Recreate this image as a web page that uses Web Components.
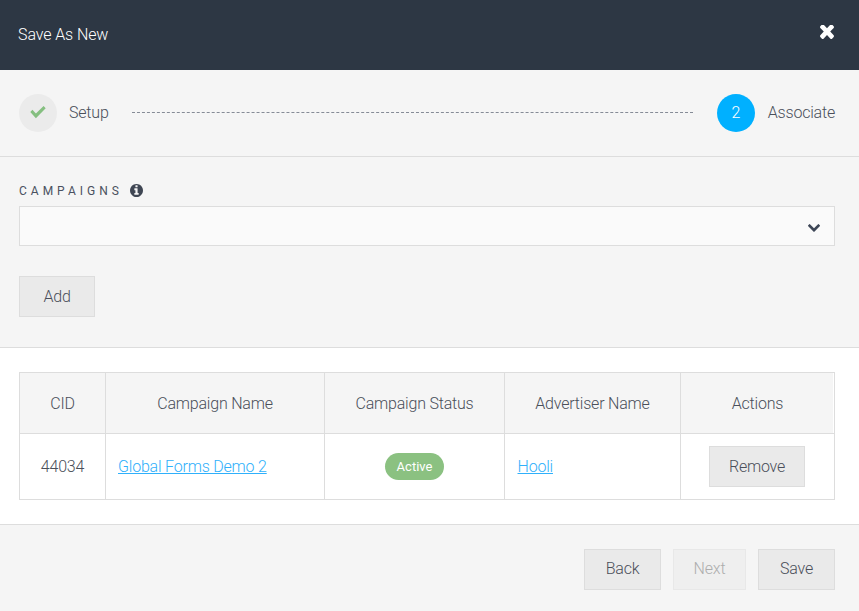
<!DOCTYPE html>
<html lang="en">
<head>
<meta charset="utf-8">
<title>Save As New</title>
<style>
  html, body { margin: 0; padding: 0; background: #f5f5f5; }
  body { font-family: Roboto, "Liberation Sans", sans-serif; font-weight: 300; font-size: 16px; letter-spacing: -0.2px; color: #4a4f5a; }
</style>
</head>
<body>
<save-modal></save-modal>

<script>
const ICONS = {
  check: ["0 0 16 12", "M0.3 5.6 L2.4 3.5 L5.9 7 L13.6 0 L15.7 2.1 L5.9 11.4 Z"],
  times: ["110 310 1188 1124", "M1298 1202q0 40-28 68l-136 136q-28 28-68 28t-68-28l-294-294-294 294q-28 28-68 28t-68-28l-136-136q-28-28-28-68t28-68l294-294-294-294q-28-28-28-68t28-68l136-136q28-28 68-28t68 28l294 294 294-294q28-28 68-28t68 28l136 136q28 28 28 68t-28 68l-294 294 294 294q28 28 28 68z"],
  chevron: ["109 535 1574 1033", "M1683 808l-742 741q-19 19-45 19t-45-19l-742-741q-19-19-19-45.500t19-45.500l166-165q19-19 45-19t45 19l531 531 531-531q19-19 45-19t45 19l166 165q19 19 19 45.500t-19 45.500z"],
  info: ["128 128 1536 1536", "M1152 1376v-160q0-14-9-23t-23-9h-96v-512q0-14-9-23t-23-9h-320q-14 0-23 9t-9 23v160q0 14 9 23t23 9h96v320h-96q-14 0-23 9t-9 23v160q0 14 9 23t23 9h448q14 0 23-9t9-23zm-128-896v-160q0-14-9-23t-23-9h-192q-14 0-23 9t-9 23v160q0 14 9 23t23 9h192q14 0 23-9t9-23zm640 416q0 209-103 385.500t-279.500 279.500-385.500 103-385.500-103-279.500-279.500-103-385.500 103-385.500 279.500-279.500 385.500-103 385.500 103 279.500 279.500 103 385.500z"]
};

class FaIcon extends HTMLElement {
  connectedCallback() {
    const [box, d] = ICONS[this.getAttribute("name")];
    const w = this.getAttribute("w");
    const h = this.getAttribute("h");
    const shadow = this.attachShadow({ mode: "open" });
    shadow.innerHTML = `
      <style>
        :host { display: block; width: ${w}px; height: ${h}px; line-height: 0; }
        svg { display: block; width: 100%; height: 100%; fill: currentColor; }
      </style>
      <svg viewBox="${box}" preserveAspectRatio="none"><path d="${d}"></path></svg>`;
  }
}

class UiButton extends HTMLElement {
  constructor() {
    super();
    const shadow = this.attachShadow({ mode: "open" });
    shadow.innerHTML = `
      <style>
        :host {
          display: inline-flex;
          align-items: center;
          justify-content: center;
          box-sizing: border-box;
          height: 41px;
          background: #eaeaea;
          border: 1px solid #dddddd;
          color: #4a4f5a;
          font-size: 16px;
          cursor: pointer;
        }
        :host([disabled]) {
          background: #efefef;
          border-color: #e8e8e8;
          color: #adadad;
          cursor: default;
        }
      </style>
      <slot></slot>`;
  }
}

class StatusBadge extends HTMLElement {
  constructor() {
    super();
    const shadow = this.attachShadow({ mode: "open" });
    shadow.innerHTML = `
      <style>
        :host {
          display: inline-flex;
          align-items: center;
          justify-content: center;
          width: 59px;
          height: 27px;
          border-radius: 14px;
          background: #8bc181;
          color: #ffffff;
          font-size: 13px;
          font-weight: 400;
          letter-spacing: 0;
        }
      </style>
      <slot></slot>`;
  }
}

class StepItem extends HTMLElement {
  constructor() {
    super();
    const shadow = this.attachShadow({ mode: "open" });
    shadow.innerHTML = `
      <style>
        :host { display: flex; align-items: center; gap: 12px; }
        :host([active]) { gap: 13px; }
        .dot {
          width: 38px;
          height: 38px;
          border-radius: 50%;
          display: flex;
          align-items: center;
          justify-content: center;
          background: #ebebeb;
          color: #85bf80;
        }
        :host([active]) .dot { background: #00b0ff; color: #ffffff; }
      </style>
      <div class="dot"><slot name="mark"></slot></div>
      <span><slot></slot></span>`;
  }
}

class StepBar extends HTMLElement {
  constructor() {
    super();
    const shadow = this.attachShadow({ mode: "open" });
    shadow.innerHTML = `
      <style>
        :host {
          display: flex;
          align-items: center;
          box-sizing: border-box;
          height: 87px;
          padding: 0 24px 1px 19px;
          border-bottom: 1px solid #dddddd;
        }
        .line { flex: 1; border-top: 1px dashed #858b96; margin: 0 24px 0 23px; }
        .tick { margin-top: -1px; }
      </style>
      <step-item>
        <fa-icon class="tick" slot="mark" name="check" w="16" h="13"></fa-icon>
        Setup
      </step-item>
      <div class="line"></div>
      <step-item active>
        <span slot="mark">2</span>
        Associate
      </step-item>`;
  }
}

class ModalHeader extends HTMLElement {
  constructor() {
    super();
    const shadow = this.attachShadow({ mode: "open" });
    shadow.innerHTML = `
      <style>
        :host {
          display: flex;
          align-items: center;
          justify-content: space-between;
          height: 70px;
          box-sizing: border-box;
          padding: 0 25px 6px 18px;
          background: #2d3744;
          color: #ffffff;
          font-size: 16px;
          font-weight: 300;
        }
        .title { margin-top: 4px; letter-spacing: -0.1px; }
      </style>
      <span class="title"><slot></slot></span>
      <fa-icon name="times" w="14" h="14"></fa-icon>`;
  }
}

class CampaignSelect extends HTMLElement {
  constructor() {
    super();
    const shadow = this.attachShadow({ mode: "open" });
    shadow.innerHTML = `
      <style>
        :host { display: block; }
        .label {
          display: flex;
          align-items: center;
          gap: 7px;
          height: 13px;
          margin-bottom: 9px;
          font-size: 12px;
          font-weight: 400;
          letter-spacing: 4px;
          color: #4a5160;
        }
        .box {
          box-sizing: border-box;
          height: 40px;
          display: flex;
          align-items: center;
          justify-content: flex-end;
          padding: 3px 14px 0 0;
          background: #fafafa;
          border: 1px solid #dddddd;
          color: #3d4656;
        }
        .label fa-icon { color: #3f4653; }
      </style>
      <div class="label"><span><slot></slot></span><fa-icon name="info" w="13" h="13"></fa-icon></div>
      <div class="box"><fa-icon name="chevron" w="12" h="8"></fa-icon></div>`;
  }
}

class CampaignTable extends HTMLElement {
  constructor() {
    super();
    const shadow = this.attachShadow({ mode: "open" });
    shadow.innerHTML = `
      <style>
        :host { display: block; }
        table {
          width: 815px;
          table-layout: fixed;
          border-collapse: collapse;
          border: 1px solid #dddddd;
          font-size: 16px;
        }
        th, td {
          border: 1px solid #dddddd;
          text-align: center;
          padding: 0 12px;
          font-weight: 300;
        }
        th { height: 60px; background: #f5f5f5; }
        th:last-child { box-shadow: inset -1px 0 0 #ffffff; }
        td { height: 65px; }
        .left { text-align: left; }
        .advertiser { padding-left: 12.5px; }
        .actions { padding-right: 13px; }
        a { color: #2fb0fb; text-decoration: underline; }
        ui-button { width: 96px; vertical-align: middle; }
        status-badge { vertical-align: middle; }
      </style>
      <table>
        <colgroup>
          <col style="width:86px"><col style="width:219px"><col style="width:180px"><col style="width:176px"><col style="width:154px">
        </colgroup>
        <thead>
          <tr>
            <th>CID</th><th>Campaign Name</th><th>Campaign Status</th><th>Advertiser Name</th><th>Actions</th>
          </tr>
        </thead>
        <tbody>
          <tr>
            <td>44034</td>
            <td class="left"><a href="#">Global Forms Demo 2</a></td>
            <td><status-badge>Active</status-badge></td>
            <td class="left advertiser"><a href="#">Hooli</a></td>
            <td class="actions"><ui-button>Remove</ui-button></td>
          </tr>
        </tbody>
      </table>`;
  }
}

class SaveModal extends HTMLElement {
  constructor() {
    super();
    const shadow = this.attachShadow({ mode: "open" });
    shadow.innerHTML = `
      <style>
        :host { display: flex; flex-direction: column; width: 859px; height: 611px; background: #f5f5f5; overflow: hidden; }
        .form { box-sizing: border-box; height: 191px; padding: 27px 24px 0 19px; border-bottom: 1px solid #dddddd; }
        .add { width: 76px; margin-top: 30px; }
        .list { box-sizing: border-box; height: 177px; padding: 24px 24px 0 19px; background: #ffffff; border-bottom: 1px solid #dddddd; }
        .foot { display: flex; justify-content: flex-end; gap: 12px; padding: 24px 24px 0 0; }
        .foot ui-button { padding-bottom: 2px; }
        .back, .save { width: 77px; }
        .next { width: 73px; }
      </style>
      <modal-header>Save As New</modal-header>
      <step-bar></step-bar>
      <div class="form">
        <campaign-select>CAMPAIGNS</campaign-select>
        <ui-button class="add">Add</ui-button>
      </div>
      <div class="list"><campaign-table></campaign-table></div>
      <div class="foot">
        <ui-button class="back">Back</ui-button>
        <ui-button class="next" disabled>Next</ui-button>
        <ui-button class="save">Save</ui-button>
      </div>`;
  }
}

customElements.define("fa-icon", FaIcon);
customElements.define("ui-button", UiButton);
customElements.define("status-badge", StatusBadge);
customElements.define("step-item", StepItem);
customElements.define("step-bar", StepBar);
customElements.define("modal-header", ModalHeader);
customElements.define("campaign-select", CampaignSelect);
customElements.define("campaign-table", CampaignTable);
customElements.define("save-modal", SaveModal);
</script>
</body>
</html>
